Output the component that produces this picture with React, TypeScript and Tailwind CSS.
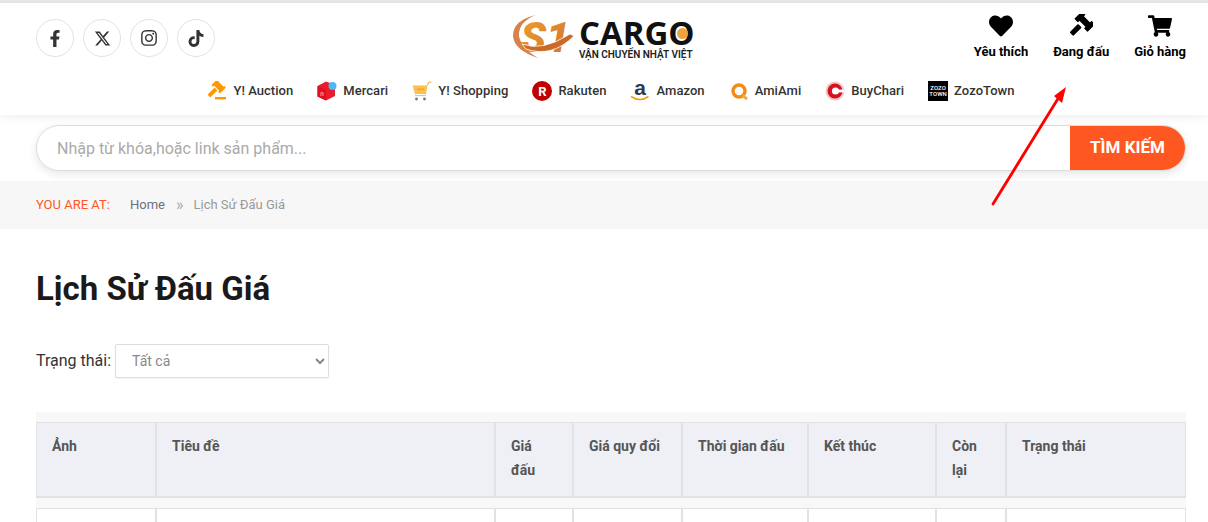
import { FaFacebookF, FaHeart, FaInstagram, FaShoppingCart, FaTiktok } from "react-icons/fa";
import { FaXTwitter } from "react-icons/fa6";

function GavelTop() {
  return (
    <svg viewBox="0 0 24 24" className="w-[24px] h-[24px]" fill="#000">
      <g transform="rotate(45 12 12)">
        <rect x="5" y="3" width="13" height="6.4" />
        <rect x="2.2" y="0.8" width="5" height="10.8" rx="0.6" />
        <rect x="15.8" y="0.8" width="5" height="10.8" rx="0.6" />
        <rect x="8.4" y="12.6" width="5.2" height="12" rx="1" />
      </g>
    </svg>
  );
}

function AuctionIcon() {
  return (
    <svg viewBox="0 0 20 20" className="w-[20px] h-[20px]" fill="#ff9800">
      <g transform="rotate(45 9 8)">
        <rect x="4.5" y="1" width="9" height="6" />
        <rect x="3" y="0" width="2.4" height="8.4" />
        <rect x="12.6" y="0" width="2.4" height="8.4" />
        <rect x="7" y="8" width="4" height="10" rx="0.6" />
      </g>
      <rect x="8" y="16" width="11" height="2.4" />
    </svg>
  );
}

function MercariIcon() {
  return (
    <svg viewBox="0 0 20 20" className="w-[20px] h-[20px]">
      <path d="M9 0.5 L18 4 V15 L9 19.5 L0.5 15.5 V5 Z" fill="#ea1c2c" />
      <path d="M0.5 5 L9 9 V19.5 L0.5 15.5 Z" fill="#e0101f" />
      <path d="M4 15 V11.5 M6 15 V11.8 M4 11.8 Q6 11 6 12.5" stroke="#ffb3b8" strokeWidth="0.8" fill="none" />
      <circle cx="15.5" cy="5" r="4" fill="#4db8f5" />
    </svg>
  );
}

function ShoppingIcon() {
  return (
    <svg viewBox="0 0 20 20" className="w-[20px] h-[20px]">
      <path d="M0.5 4.5 H15.5 L14 13 H3 Z" fill="#fbc04e" />
      <rect x="5" y="7.5" width="7" height="1.5" fill="#f5a524" />
      <path d="M15.5 4.5 L16.5 1.2 H19.5" stroke="#e6a94b" strokeWidth="1" fill="none" />
      <path d="M3 14.5 H14" stroke="#c9c9c9" strokeWidth="1.2" />
      <circle cx="4.5" cy="18" r="1.4" fill="#777" />
      <circle cx="12.5" cy="18" r="1.4" fill="#777" />
    </svg>
  );
}

function AmazonIcon() {
  return (
    <svg viewBox="0 -6 20 32" className="w-[20px] h-[32px]">
      <text x="10" y="13.5" textAnchor="middle" fontSize="21" fontWeight="700" fill="#2f3a4a" fontFamily="Liberation Sans, sans-serif">a</text>
      <path d="M1 15.5 Q10 21.5 18.5 15.5" stroke="#f59e0b" strokeWidth="1.6" fill="none" />
    </svg>
  );
}

function AmiAmiIcon() {
  return (
    <svg viewBox="0 0 20 20" className="w-[20px] h-[20px]">
      <circle cx="10" cy="10" r="6" stroke="#f28c16" strokeWidth="3.4" fill="none" />
      <path d="M13.5 14.5 L18 18" stroke="#f9a83c" strokeWidth="3" />
    </svg>
  );
}

function BuyChariIcon() {
  return (
    <svg viewBox="0 0 20 20" className="w-[20px] h-[20px]">
      <circle cx="10" cy="10" r="9.5" fill="#f3c6c8" />
      <circle cx="10" cy="10" r="7.5" fill="#d5121e" />
      <circle cx="10.5" cy="10" r="3.6" fill="#fff" />
      <path d="M11 8.6 H19 V11.4 H11 Z" fill="#fff" />
    </svg>
  );
}

const navItems = [
  { label: "Y! Auction", icon: <AuctionIcon /> },
  { label: "Mercari", icon: <MercariIcon /> },
  { label: "Y! Shopping", icon: <ShoppingIcon /> },
  {
    label: "Rakuten",
    icon: (
      <div className="w-[20px] h-[20px] rounded-full bg-[#bf0000] flex items-center justify-center text-white text-[13px] font-bold leading-none">
        R
      </div>
    ),
  },
  { label: "Amazon", icon: <AmazonIcon /> },
  { label: "AmiAmi", icon: <AmiAmiIcon /> },
  { label: "BuyChari", icon: <BuyChariIcon /> },
  {
    label: "ZozoTown",
    icon: (
      <div className="w-[20px] h-[20px] bg-black flex flex-col items-center justify-center text-white text-[6px] leading-[6px] font-medium">
        <span>ZOZO</span>
        <span>TOWN</span>
      </div>
    ),
  },
];

const socials = [
  { icon: <FaFacebookF className="w-[16px] h-[17px]" /> },
  { icon: <FaXTwitter className="w-[17px] h-[17px]" /> },
  { icon: <FaInstagram className="w-[18px] h-[18px]" /> },
  { icon: <FaTiktok className="w-[16px] h-[17px]" /> },
];

const columns = [
  { label: "Ảnh", width: "w-[120px]" },
  { label: "Tiêu đề", width: "w-[339px]" },
  { label: "Giá đấu", width: "w-[78px]" },
  { label: "Giá quy đổi", width: "w-[109px]" },
  { label: "Thời gian đấu", width: "w-[126px]" },
  { label: "Kết thúc", width: "w-[128px]" },
  { label: "Còn lại", width: "w-[70px]" },
  { label: "Trạng thái", width: "w-[180px]" },
];

function Logo() {
  return (
    <div className="flex items-center ml-4 w-[181px] h-[48px]">
      <svg viewBox="0 0 67 48" className="w-[67px] h-[48px] shrink-0">
        <defs>
          <linearGradient id="s1" x1="0" y1="0" x2="1" y2="1">
            <stop offset="0" stopColor="#f0a030" />
            <stop offset="1" stopColor="#cf6f2c" />
          </linearGradient>
        </defs>
        <path d="M24 1 Q1 6 1 22 Q2 36 26 44 Q9 34 7 22 Q6 8 24 1 Z" fill="#d9814a" />
        <text x="33" y="38" textAnchor="middle" fontSize="42" fontWeight="900" fontStyle="italic" fill="url(#s1)" fontFamily="Roboto, sans-serif">S1</text>
        <path d="M10 30 Q30 38 58 20 L62 22 Q40 44 14 35 Z" fill="#c96a2b" stroke="#fff" strokeWidth="0.8" />
      </svg>
      <div className="flex flex-col items-start">
        <div className="relative text-[33px] leading-[32px] font-bold text-[#111] font-['Open_Sans',sans-serif]">
          CARGO
          <span className="absolute right-[7px] top-[11px] w-[11px] h-[11px] rounded-full bg-[#eda33e]" />
        </div>
        <div className="text-[10px] leading-[10px] mt-[1px] font-semibold text-[#222] whitespace-nowrap">VẬN CHUYỂN NHẬT VIỆT</div>
      </div>
    </div>
  );
}

export default function App() {
  return (
    <div className="relative h-[522px] overflow-hidden bg-white font-['Roboto',sans-serif]">
      <header className="relative z-10 bg-white border-t-[3px] border-[#e5e5e5] h-[115px] shadow-[0_2px_10px_rgba(0,0,0,0.07)]">
        <div className="pl-9 pr-[22px] pt-[11px] flex items-start justify-between h-[63px]">
          <div className="flex gap-[9px] pt-[5px]">
            {socials.map((s, i) => (
              <a key={i} className="w-[38px] h-[38px] rounded-full border border-[#e2e2e2] flex items-center justify-center text-[#333]">
                {s.icon}
              </a>
            ))}
          </div>
          <Logo />
          <div className="flex gap-[25px] text-[13px] font-bold text-black">
            <div className="flex flex-col items-center gap-1">
              <FaHeart className="w-[24px] h-[24px]" />
              <span>Yêu thích</span>
            </div>
            <div className="flex flex-col items-center gap-1">
              <GavelTop />
              <span>Đang đấu</span>
            </div>
            <div className="flex flex-col items-center gap-1">
              <FaShoppingCart className="w-[24px] h-[24px]" />
              <span>Giỏ hàng</span>
            </div>
          </div>
        </div>
        <nav className="flex justify-center gap-6 pt-[15px] pl-9 pr-[22px]">
          {navItems.map((item) => (
            <a key={item.label} className="flex items-center gap-[6px] text-[13px] font-medium tracking-[0.05px] text-[#333] h-[20px]">
              {item.icon}
              <span>{item.label}</span>
            </a>
          ))}
        </nav>
      </header>

      <div className="pl-9 pr-[22px] pt-[10px] pb-[10px]">
        <div className="flex h-[46px] rounded-full bg-white border border-[#ddd] overflow-hidden shadow-[0_3px_8px_rgba(0,0,0,0.1)]">
          <input
            placeholder="Nhập từ khóa,hoặc link sản phẩm..."
            className="flex-1 pl-5 pt-[2px] text-base outline-none placeholder:text-[#aaa]"
          />
          <button className="w-[115px] bg-[#ff5722] text-white font-bold text-[17px] -my-px">TÌM KIẾM</button>
        </div>
      </div>

      <div className="h-[48px] bg-[#f7f7f7] pl-9 pr-[22px] flex items-center text-[13px]">
        <span className="text-[#ff5722] w-[94px]">YOU ARE AT:</span>
        <span className="text-[#6b7280]">Home</span>
        <span className="text-[#aaa] text-base ml-[11px] mr-[10px]">»</span>
        <span className="text-[#999]">Lịch Sử Đấu Giá</span>
      </div>

      <main className="pl-9 pr-[22px]">
        <h1 className="text-[33px] leading-[40px] font-bold text-[#1a1a1a] mt-[40px]">Lịch Sử Đấu Giá</h1>
        <div className="flex items-center gap-1 mt-[35px] text-base text-[#333]">
          <label>Trạng thái:</label>
          <select className="w-[214px] h-[34px] pl-3 text-sm text-[#888] bg-white border border-[#ddd] rounded-[2px] shadow-[0_1px_2px_rgba(0,0,0,0.06)]">
            <option>Tất cả</option>
          </select>
        </div>
        <div className="mt-[34px] pt-[10px] bg-[#f8f8f8]">
          <table className="w-[1150px] table-fixed border-separate border-spacing-0 text-sm">
            <colgroup>
              {columns.map((c) => (
                <col key={c.label} className={c.width} />
              ))}
            </colgroup>
            <thead>
              <tr className="bg-[#eef0f5] h-[76px]">
                {columns.map((c) => (
                  <th key={c.label} className="border border-b-2 border-[#e2e2e2] px-[15px] pt-[11px] pb-[12px] align-top text-left font-bold leading-[24px] text-[#555]">
                    {c.label}
                  </th>
                ))}
              </tr>
            </thead>
            <tbody>
              <tr className="h-[10px]">
                <td colSpan={8} />
              </tr>
              <tr className="bg-white h-[60px]">
                {columns.map((c) => (
                  <td key={c.label} className="border border-[#e2e2e2]" />
                ))}
              </tr>
            </tbody>
          </table>
        </div>
      </main>

      <svg className="absolute left-[985px] top-[80px] z-20 w-[90px] h-[130px]" viewBox="0 0 90 130">
        <line x1="8" y1="124" x2="74" y2="17" stroke="#ff0000" strokeWidth="2.8" strokeLinecap="round" />
        <path d="M81 7 L69 16 L77 23 Z" fill="#ff0000" />
      </svg>
    </div>
  );
}
